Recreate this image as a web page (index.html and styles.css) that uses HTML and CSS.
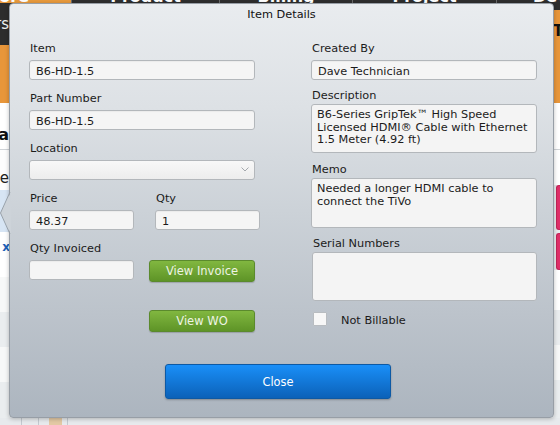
FILE: index.html
```html
<!DOCTYPE html>
<html lang="en">
<head>
<meta charset="utf-8">
<title>Item Details</title>
<link rel="stylesheet" href="styles.css">
</head>
<body>
<div class="page">
  <nav class="topnav">
    <div class="nav-item nav-store"><span>Store</span></div>
    <div class="nav-item nav-product"><span>Product</span></div>
    <div class="nav-item nav-billing"><span>Billing</span></div>
    <div class="nav-item nav-project"><span>Project</span></div>
    <div class="nav-item nav-dev"><span>Dev</span></div>
  </nav>

  <div class="workspace">
    <aside class="left-rail">
      <div class="rail-cell lr-dark"><span>Orders</span></div>
      <div class="rail-cell lr-orange"></div>
      <div class="rail-cell lr-head"><span>Data</span></div>
      <div class="rail-cell lr-plain"><span>Source</span></div>
      <div class="rail-cell lr-selected"></div>
      <div class="rail-cell lr-link"><span>x</span></div>
      <div class="rail-cell lr-alt"></div>
      <div class="rail-cell lr-shade"></div>
      <div class="rail-cell lr-alt"></div>
      <div class="rail-cell lr-shade lr-last"></div>
    </aside>
    <div class="center-area"></div>
    <aside class="right-rail">
      <div class="rr-dark"></div>
      <div class="rr-orange"><span>T</span></div>
      <div class="rr-head"></div>
      <div class="rr-plain"></div>
      <div class="rr-pink rr-pink-1"></div>
      <div class="rr-pink rr-pink-2"></div>
      <div class="rr-plain rr-plain-2"></div>
      <div class="rr-shade"></div>
      <div class="rr-alt"></div>
      <div class="rr-shade rr-last"></div>
    </aside>
  </div>

  <div class="footer-strip">
    <i class="fs-line fs-a"></i>
    <i class="fs-line fs-b"></i>
    <i class="fs-tan"></i>
    <i class="fs-line fs-c"></i>
  </div>

  <section class="dialog">
    <svg class="dlg-pointer" width="11" height="42" viewBox="0 0 11 42">
      <polygon points="11,0 0.5,21 11,42" fill="#cdd3d9"/>
      <polyline points="10,0 0.5,21 10,42" fill="none" stroke="#98a0a8" stroke-width="1"/>
    </svg>
    <div class="dlg-title">Item Details</div>
    <div class="dlg-body">
      <div class="col col-left">
        <div class="field">
          <label class="field-label">Item</label>
          <input class="text-input" type="text" value="B6-HD-1.5">
        </div>
        <div class="field">
          <label class="field-label">Part Number</label>
          <input class="text-input" type="text" value="B6-HD-1.5">
        </div>
        <div class="field">
          <label class="field-label">Location</label>
          <div class="select-box">
            <svg class="chev" width="8" height="5" viewBox="0 0 8 5"><polyline points="0.5,0.5 4,4 7.5,0.5" fill="none" stroke="#a4a8ad" stroke-width="1"/></svg>
          </div>
        </div>
        <div class="field-row">
          <div class="field field-small">
            <label class="field-label">Price</label>
            <input class="text-input" type="text" value="48.37">
          </div>
          <div class="field field-small">
            <label class="field-label">Qty</label>
            <input class="text-input" type="text" value="1">
          </div>
        </div>
        <div class="invoice-row">
          <div class="field field-small">
            <label class="field-label">Qty Invoiced</label>
            <input class="text-input" type="text" value="">
          </div>
          <button class="btn-green btn-invoice" type="button">View Invoice</button>
        </div>
        <button class="btn-green btn-wo" type="button">View WO</button>
      </div>

      <div class="col col-right">
        <div class="field field-created">
          <label class="field-label">Created By</label>
          <input class="text-input" type="text" value="Dave Technician">
        </div>
        <div class="field field-desc">
          <label class="field-label field-label-tight">Description</label>
          <textarea class="text-area area-desc">B6-Series GripTek™ High Speed
Licensed HDMI® Cable with Ethernet
1.5 Meter (4.92 ft)</textarea>
        </div>
        <div class="field field-memo">
          <label class="field-label field-label-tight">Memo</label>
          <textarea class="text-area area-memo">Needed a longer HDMI cable to
connect the TiVo</textarea>
        </div>
        <div class="field field-serial">
          <label class="field-label field-label-tight field-label-serial">Serial Numbers</label>
          <textarea class="text-area area-serial"></textarea>
        </div>
        <div class="check-row">
          <span class="check-box"></span>
          <span class="check-label">Not Billable</span>
        </div>
      </div>
    </div>
    <div class="dlg-footer">
      <button class="btn-close" type="button">Close</button>
    </div>
  </section>
</div>
</body>
</html>
```

FILE: styles.css
```css
* { box-sizing: border-box; }
html, body { margin: 0; padding: 0; }
body {
  width: 560px;
  height: 425px;
  overflow: hidden;
  font-family: "DejaVu Sans", Verdana, sans-serif;
  background: #e8ebee;
}
.page { position: relative; width: 560px; height: 425px; overflow: hidden; }

/* ---------- background app ---------- */
.topnav { display: flex; height: 3px; background: #2e2e2e; overflow: hidden; }
.nav-item {
  display: flex;
  justify-content: center;
  align-items: flex-start;
  height: 3px;
  overflow: hidden;
  color: #fff;
  font-weight: bold;
  font-size: 16px;
  line-height: 16px;
  border-right: 1px solid #6a6a6a;
  white-space: nowrap;
}
.nav-item span { margin-top: -11px; }
.nav-store { width: 72px; background: #e99a3d; justify-content: flex-end; padding-right: 42px; }
.nav-product { width: 148px; }
.nav-billing { width: 133px; }
.nav-project { width: 144px; }
.nav-dev { flex: 1; border-right: 0; justify-content: flex-start; padding-left: 36px; }

.workspace { display: flex; height: 415px; }
.left-rail { width: 40px; display: flex; flex-direction: column; }
.center-area { flex: 1; background: #eef0f2; }
.right-rail { width: 20px; display: flex; flex-direction: column; }

.rail-cell {
  display: flex;
  justify-content: flex-end;
  align-items: center;
  padding-right: 31px;
  overflow: hidden;
  white-space: nowrap;
}
.lr-dark { height: 42px; background: #2d2d2d; color: #f2f2f2; font-size: 15px; }
.lr-orange { height: 58px; background: #e8963a; }
.lr-head { height: 47px; background: #fff; border-bottom: 1px solid #cfd3d7; color: #111; font-weight: bold; font-size: 16px; padding-top: 16px; }
.lr-plain { height: 40px; background: #fdfdfd; color: #222; font-size: 15px; padding-top: 16px; }
.lr-selected { height: 42px; background: #d7e5f4; }
.lr-link { height: 45px; background: #fff; color: #1d62b8; font-weight: bold; font-size: 12px; align-items: flex-start; padding-top: 8px; padding-right: 30px; }
.lr-alt { height: 35px; background: #f7f8f8; }
.lr-shade { height: 35px; background: #eaedef; }
.lr-last { height: 36px; }

.rr-dark { height: 7px; background: #2d2d2d; }
.rr-orange { height: 93px; background: #e8963a; color: #111; font-weight: bold; font-size: 15px; padding: 12px 0 0 13px; }
.rr-head { height: 47px; background: #fff; border-bottom: 1px solid #cfd3d7; }
.rr-plain { height: 35px; background: #fff; }
.rr-pink { margin-left: 16px; background: #df2f69; border-radius: 3px 0 0 3px; border: 1px solid #c22457; border-right: 0; }
.rr-pink-1 { height: 45px; }
.rr-pink-2 { height: 37px; margin-top: 3px; }
.rr-plain-2 { height: 40px; }
.rr-shade { height: 35px; background: #eaedef; }
.rr-alt { height: 35px; background: #f7f8f8; }
.rr-last { height: 38px; }

.footer-strip { display: flex; height: 7px; background: #e7eaed; }
.fs-line { display: block; width: 1px; height: 7px; background: #c3c9cf; }
.fs-a { margin-left: 21px; }
.fs-b { margin-left: 16px; }
.fs-tan { display: block; width: 13px; height: 7px; margin-left: 10px; background: #e3c9a4; }
.fs-c { margin-left: 5px; }

/* ---------- dialog ---------- */
.dialog {
  position: absolute;
  left: 9px;
  top: 3px;
  width: 545px;
  height: 415px;
  border: 1px solid #979ea6;
  border-radius: 4px;
  background: linear-gradient(#e9ecef 0%, #dde1e5 25%, #ccd2d8 50%, #bcc3cb 75%, #acb5bf 100%);
  box-shadow: 0 1px 4px rgba(0, 0, 0, 0.25);
  padding: 4px 19px 0 19px;
  color: #1b1b1b;
  font-size: 11.3px;
}
.dlg-pointer { position: absolute; left: -10px; top: 188px; }
.dlg-title { text-align: center; line-height: 14px; color: #111; }

.dlg-body { display: flex; gap: 56px; margin-top: 19.5px; }
.col-left { width: 226px; flex: none; }
.col-right { width: 226px; flex: none; }

.field { margin-bottom: 12px; }
.field-label { display: block; line-height: 14px; padding-left: 1px; margin-bottom: 4px; }
.field-label-tight { margin-bottom: 1px; }
.field-label-serial { padding-left: 2px; }

.text-input {
  display: block;
  width: 100%;
  height: 20px;
  margin: 0;
  border: 1px solid #b3b7bb;
  border-radius: 3px;
  background: #f5f5f5;
  padding: 4px 6px 0 6px;
  font-family: "DejaVu Sans", Verdana, sans-serif;
  font-size: 11.3px;
  line-height: 14px;
  color: #1b1b1b;
  box-shadow: inset 0 1px 1px rgba(0, 0, 0, 0.04);
  outline: none;
}

.select-box {
  display: flex;
  justify-content: flex-end;
  align-items: center;
  height: 20px;
  border: 1px solid #b3b7bb;
  border-radius: 3px;
  background: linear-gradient(#f8f8f8, #ededed);
  padding-right: 5px;
}
.chev { display: block; }

.field-row { display: flex; gap: 21px; }
.field-small { width: 105px; flex: none; }

.invoice-row { display: flex; gap: 15px; align-items: flex-start; }

.btn-green {
  display: flex;
  align-items: center;
  justify-content: center;
  width: 106px;
  height: 22px;
  margin: 0;
  padding: 0;
  border: 1px solid #5b8a2d;
  border-radius: 3px;
  background: linear-gradient(#81b740, #5e9427);
  color: #eef4e4;
  font-family: "DejaVu Sans", Verdana, sans-serif;
  font-size: 11.5px;
  box-shadow: 0 1px 1px rgba(0, 0, 0, 0.18);
}
.btn-invoice { margin-top: 18px; }
.btn-wo { margin-top: 18px; margin-left: 120px; }

.field-created { margin-bottom: 9.5px; }
.field-desc { margin-bottom: 10px; }
.field-memo { margin-bottom: 9px; }
.field-serial { margin-bottom: 11px; }

.text-area {
  display: block;
  width: 100%;
  margin: 0;
  border: 1px solid #b3b7bb;
  border-radius: 3px;
  background: #f4f4f4;
  padding: 4px 2px 0 5px;
  font-family: "DejaVu Sans", Verdana, sans-serif;
  font-size: 11.3px;
  line-height: 12.7px;
  color: #1b1b1b;
  resize: none;
  overflow: hidden;
  white-space: pre;
  outline: none;
}
.area-desc { height: 49px; }
.area-memo { height: 50px; }
.area-serial { height: 49px; width: 225px; margin-left: 1px; }

.check-row { display: flex; align-items: flex-start; }
.check-box {
  display: block;
  width: 14px;
  height: 14px;
  margin-left: 2px;
  border: 1px solid #b8bcc0;
  border-radius: 1px;
  background: #f7f7f7;
}
.check-label { margin-left: 14px; margin-top: 2px; line-height: 14px; }

.dlg-footer { margin-top: 32.5px; }
.btn-close {
  display: flex;
  align-items: center;
  justify-content: center;
  width: 226px;
  height: 35px;
  margin: 0 0 0 136px;
  padding: 0;
  border: 1px solid #0d59a4;
  border-radius: 3px;
  background: linear-gradient(#1a8ff8, #0b61b8);
  color: #fff;
  font-family: "DejaVu Sans", Verdana, sans-serif;
  font-size: 11.4px;
  box-shadow: 0 1px 2px rgba(0, 0, 0, 0.25);
}
```
